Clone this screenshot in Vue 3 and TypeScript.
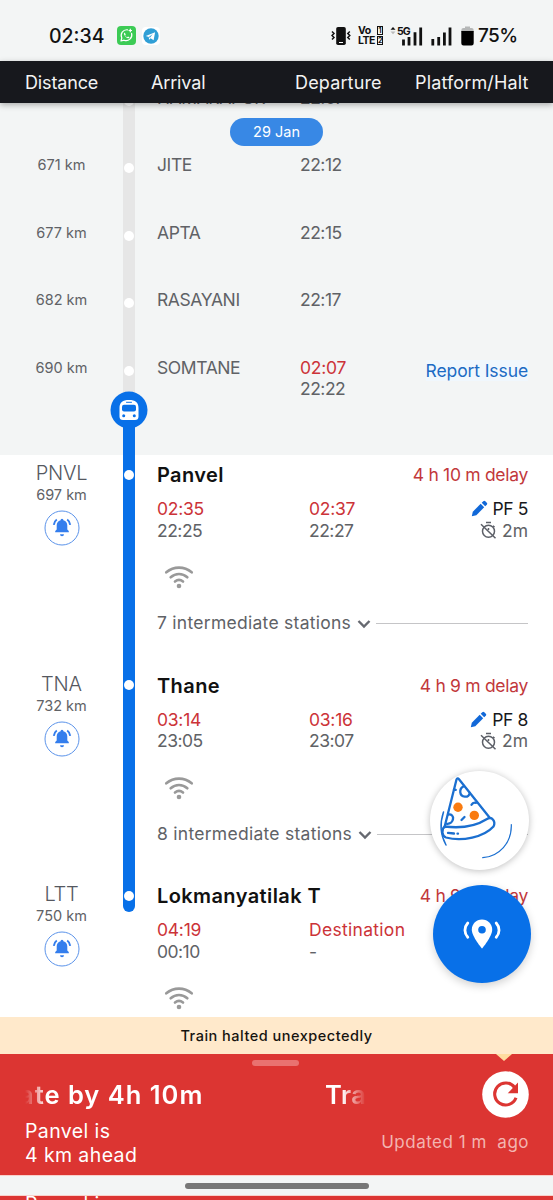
<script setup lang="ts">
interface Passed {
  name: string
  km: string
  late?: string
  time: string
}
interface Stop {
  code: string
  km: string
  name: string
  arr: string
  arrPlan: string
  dep: string
  depPlan: string
  delay: string
  pf?: string
  between?: string
}

const passed: Passed[] = [
  { name: 'HAMARAPUR', km: '', time: '22:07' },
  { name: 'JITE', km: '671 km', time: '22:12' },
  { name: 'APTA', km: '677 km', time: '22:15' },
  { name: 'RASAYANI', km: '682 km', time: '22:17' },
  { name: 'SOMTANE', km: '690 km', late: '02:07', time: '22:22' },
]

const stops: Stop[] = [
  { code: 'PNVL', km: '697 km', name: 'Panvel', arr: '02:35', arrPlan: '22:25', dep: '02:37', depPlan: '22:27', delay: '4 h 10 m delay', pf: 'PF 5', between: '7 intermediate stations' },
  { code: 'TNA', km: '732 km', name: 'Thane', arr: '03:14', arrPlan: '23:05', dep: '03:16', depPlan: '23:07', delay: '4 h 9 m delay', pf: 'PF 8', between: '8 intermediate stations' },
  { code: 'LTT', km: '750 km', name: 'Lokmanyatilak T', arr: '04:19', arrPlan: '00:10', dep: 'Destination', depPlan: '-', delay: '4 h 9 m delay' },
]
</script>

<template>
  <div class="phone">
    <div class="status">
      <span class="clock">02:34</span>
      <svg class="wa" width="19" height="19" viewBox="0 0 19 19">
        <rect width="19" height="19" rx="4" fill="#3ccb55" />
        <path d="M4 15l.8-3A5.7 5.7 0 0 1 10.500 3.800M14.600 7.400A5.700 5.700 0 0 1 7 14.200L4 15" fill="none" stroke="#fff" stroke-width="1.200" stroke-linecap="round" />
        <path d="M7.300 6.500c-1 1.200.2 3.200 1.500 4.400s3 1.800 3.800.6l-1.500-1-1 .7c-.9-.4-1.600-1.100-2-2l.7-.9z" fill="#fff" />
        <path d="M13.300 2.800v3.400M11.600 4.500H15" stroke="#fff" stroke-width="1.200" />
      </svg>
      <svg class="tg" width="18" height="18" viewBox="0 0 18 18">
        <rect width="18" height="18" rx="4" fill="#fff" />
        <circle cx="9" cy="9" r="7.700" fill="#309fd6" />
        <path d="M3.800 8.900l9.300-3.700-1.500 8-3-2-1.500 1.500-.3-2.600z" fill="#fff" />
        <path d="M6.800 10l4-2.900-2.900 3.600z" fill="#309fd6" />
      </svg>
      <div class="status-right">
        <svg width="20" height="20" viewBox="0 0 20 20" fill="none" stroke="#111" stroke-width="1.500">
          <rect x="5.200" y="1" width="9.600" height="18" rx="1.800" fill="#111" stroke="none" />
          <path d="M8 16.500h4" stroke="#fff" stroke-width="1" />
          <path d="M1 5.500l2 2-2 2 2 2-2 2M18.800 5.500l-2 2 2 2-2 2 2 2" />
        </svg>
        <div class="volte">
          <div><span>Vo</span><i class="solid">1</i></div>
          <div><span>LTE</span><i class="line">2</i></div>
        </div>
        <svg class="sig5" width="33" height="20" viewBox="0 0 33 20">
          <path d="M.5 3.800L3 1l2.500 2.800z" fill="#111" />
          <path d="M.5 5.500L3 8.200l2.500-2.700z" fill="#bbb" />
          <text x="7" y="9" font-size="10.500" font-weight="700" letter-spacing="-1" fill="#111">5G</text>
          <path d="M13.500 19.500v-6M19 19.500v-8.500M25 19.500V6.300M30.700 19.500V1.500" stroke="#111" stroke-width="2.800" />
        </svg>
        <svg class="sig" width="21" height="20" viewBox="0 0 21 20">
          <path d="M1.800 19.500v-6.500M7.700 19.500v-8.500M13.400 19.500V6.500M19 19.500V1.500" stroke="#111" stroke-width="2.800" />
        </svg>
        <svg class="batt" width="13" height="20" viewBox="0 0 13 20">
          <path d="M2.500 2H4V.500h5V2h1.500A2.200 2.200 0 0 1 12.700 4.200V6H.3V4.200A2.200 2.200 0 0 1 2.500 2z" fill="#b5b7b7" />
          <path d="M.3 5h12.400v12.300A2.200 2.200 0 0 1 10.500 19.500h-8A2.200 2.200 0 0 1 .3 17.300z" fill="#000" />
        </svg>
        <span class="pct">75%</span>
      </div>
    </div>

    <header class="head">
      <span class="tight">Distance</span><span class="tight">Arrival</span>
      <span class="wide">Departure</span><span class="wide">Platform/Halt</span>
    </header>

    <main class="list">
      <div class="date">29 Jan</div>
      <section class="passed">
        <div v-for="(p, i) in passed" :key="p.name" class="prow" :class="{ last: i === 4 }">
          <div class="pkm">{{ p.km }}</div>
          <div class="rail"><span class="dot" /></div>
          <div class="pname">{{ p.name }}</div>
          <div class="ptime">
            <div v-if="p.late" class="red">{{ p.late }}</div>
            <div class="plan">{{ p.time }}</div>
          </div>
          <div class="pissue"><span v-if="i === 4">Report Issue</span></div>
          <svg v-if="i === 4" class="train" width="38" height="38" viewBox="0 0 38 38">
            <circle cx="19" cy="19" r="18.500" fill="#0870e8" />
            <path d="M9.500 17c0-5.500 3-8 9.500-8s9.500 2.500 9.500 8v8.500a3.500 3.500 0 0 1-3.500 3.500H13a3.500 3.500 0 0 1-3.500-3.500z" fill="#fff" />
            <rect x="12" y="13.800" width="14" height="6.800" rx="2" fill="#0870e8" />
            <path d="M16.500 11.300h5" stroke="#0870e8" stroke-width="1" stroke-linecap="round" />
            <circle cx="13.700" cy="24.700" r="1.500" fill="#0870e8" />
            <circle cx="24.300" cy="24.700" r="1.500" fill="#0870e8" />
          </svg>
        </div>
      </section>

      <section v-for="(s, i) in stops" :key="s.code" class="stop">
        <div class="side">
          <div class="code">{{ s.code }}</div>
          <div class="km">{{ s.km }}</div>
          <svg class="bell" width="36" height="36" viewBox="0 0 36 36">
            <circle cx="18" cy="18" r="17" fill="#fff" stroke="#5b93ea" stroke-width="1" />
            <path d="M18 8.700a1.400 1.400 0 0 1 1.400 1.500c2.700.7 3.900 2.700 3.900 5.300v4l1.500 1.500v1.200H11.200V21l1.500-1.500v-4c0-2.600 1.200-4.600 3.900-5.300A1.400 1.400 0 0 1 18 8.700z" fill="#347eed" />
            <path d="M16 24.200h4a2 2 0 0 1-4 0z" fill="#347eed" />
            <path d="M12.800 9.600c-1.800 1.300-2.800 3-3 5.300M23.200 9.600c1.800 1.300 2.800 3 3 5.300" fill="none" stroke="#347eed" stroke-width="1.900" />
          </svg>
        </div>
        <div class="rail blue" :class="{ end: i === 2 }"><span class="dot" /></div>
        <div class="info">
          <div class="title"><b>{{ s.name }}</b><span class="delay">{{ s.delay }}</span></div>
          <div class="times">
            <div><div class="red">{{ s.arr }}</div><div class="plan">{{ s.arrPlan }}</div></div>
            <div><div class="red" :class="{ dest: i === 2 }">{{ s.dep }}</div><div class="plan">{{ s.depPlan }}</div></div>
            <div v-if="s.pf" class="plat">
              <div class="pf">
                <svg width="17" height="17" viewBox="0 0 17 17" fill="#1168d8">
                  <path d="M.8 16.200l1-4.500L9.700 3.800l3.500 3.500-7.900 7.900z" />
                  <path d="M10.700 2.800l1.600-1.600a1.400 1.400 0 0 1 2 0l1.500 1.500a1.400 1.400 0 0 1 0 2l-1.600 1.600z" />
                </svg>{{ s.pf }}
              </div>
              <div class="halt">
                <svg width="17" height="18" viewBox="0 0 17 18" fill="none" stroke="#5d6068" stroke-width="1.500">
                  <circle cx="8.500" cy="10.200" r="6" />
                  <path d="M6 1.500h5M8.500 7v2M13 4.700l1.500 1.500M1 3.200l14.500 14" />
                </svg>2m
              </div>
            </div>
          </div>
          <svg class="wifi" width="30" height="24" viewBox="0 0 30 24" fill="none" stroke="#999" stroke-width="2.700" stroke-linecap="round">
            <path d="M2.300 7.300c7.600-6.200 17.800-6.200 25.400 0" />
            <path d="M6.700 12.200c4.900-4.300 11.700-4.300 16.600 0" />
            <path d="M11 16.500c2.400-1.900 5.600-1.900 8 0" />
            <circle cx="15" cy="21" r="2.300" fill="#999" stroke="none" />
          </svg>
          <div v-if="s.between" class="between">
            <span>{{ s.between }}</span>
            <svg width="14" height="10" viewBox="0 0 14 10"><path d="M1.500 2l5.500 5.500L12.500 2" fill="none" stroke="#666970" stroke-width="2.400" /></svg>
            <hr />
          </div>
        </div>
      </section>
    </main>

    <div class="alert">Train halted unexpectedly</div>
    <footer class="sheet">
      <div class="grab" />
      <div class="notch" />
      <div class="bar">
        <div class="marquee"><span class="m1">ate by 4h 10m</span><span class="m2">Train</span></div>
        <svg class="refresh" width="47" height="47" viewBox="0 0 47 47">
          <circle cx="23.500" cy="23.500" r="23.300" fill="#fff" />
          <path d="M32.600 16.500A11 11 0 1 0 34 26.800" fill="none" stroke="#dc3532" stroke-width="3.100" />
          <path d="M36 11.500v10.800H25.700z" fill="#dc3532" />
        </svg>
      </div>
      <div class="bar low">
        <div class="ahead">Panvel is<br />4 km ahead</div>
        <div class="upd">Updated 1 m&nbsp; ago</div>
      </div>
    </footer>
    <div class="nav"><span /></div>
    <div class="peek">Panvel is</div>

    <svg class="fab pizza" width="99" height="99" viewBox="0 0 99 99" fill="none" stroke="#1b6fd0" stroke-width="2.300" stroke-linecap="round" stroke-linejoin="round">
      <path d="M14.500 56.300L26.500 8.500Q27.500 6.500 29 8.200L59.500 46.500" />
      <path d="M14.500 55.500C30 57.500 46 55 57 48c5-3 9 2.500 6.500 7.500C54 66 32 71 16 66.500c-4-1.300-5-8-1.500-11z" />
      <path d="M33.300 15.500c-4.500 2.500-4 9.500 1.500 10.200 3 .2 4.500-1.500 5-3.800M18.500 43.500c3-.5 5 1.800 4.500 4.500-.4 2.500-2.500 5-6 4.800M41.500 33.800c1-2 2.500-2.500 4.500-2M24 18.500l1.800.3M31.500 49l3-3" />
      <path d="M18 61.800l6 .7M27.500 62.700h.500" />
      <path d="M13.500 41C9.500 53 11 65 16 74" stroke-width="1.500" />
      <path d="M81.300 53.500C82 72 69 85.500 52.700 86.700" stroke-width="1.200" />
      <circle cx="28" cy="36.300" r="4.700" fill="#f97b10" stroke="none" />
      <circle cx="44.300" cy="44.400" r="4.700" fill="#f97b10" stroke="none" />
    </svg>
    <svg class="fab locate" width="98" height="98" viewBox="0 0 98 98">
      <path d="M49 34.500c-5.900 0-10.200 4.400-10.200 10.200C38.800 51.500 49 63.500 49 63.500s10.200-12 10.200-18.800c0-5.800-4.300-10.200-10.200-10.200z" fill="#fff" />
      <circle cx="49" cy="44.700" r="3.800" fill="#0870e8" />
      <path d="M34.800 38c-3.800 4.300-3.800 10 0 14.300M63.200 38c3.800 4.300 3.800 10 0 14.300" fill="none" stroke="#fff" stroke-width="2.800" stroke-linecap="round" />
    </svg>
  </div>
</template>

<style>
body { margin: 0; }
</style>

<style scoped>
.phone { position: relative; width: 553px; height: 1200px; overflow: hidden; background: #fff; font-family: Inter, "Liberation Sans", sans-serif; color: #606266; font-size: 17.5px; display: flex; flex-direction: column; white-space: nowrap; }
svg { flex: none; display: block; }
.status { height: 61px; flex: none; background: #f3f5f5; display: flex; align-items: center; padding: 10px 36px 0 49px; box-sizing: border-box; color: #111; }
.clock { font-size: 19.5px; font-weight: 500; width: 68px; }
.tg { margin-left: 6px; }
.status-right { margin-left: auto; display: flex; align-items: center; }
.volte { margin-left: 7px; width: 25px; font-weight: 700; font-size: 10.500px; line-height: 10px; letter-spacing: -.5px; }
.volte div { display: flex; justify-content: space-between; align-items: center; }
.volte i { font-style: normal; font-size: 7px; line-height: 7px; width: 4px; text-align: center; border: 1px solid #111; letter-spacing: 0; }
.volte .solid { border-width: 1px 1.500px; }
.sig5 { margin-left: 7px; }
.sig { margin-left: 8px; }
.batt { margin-left: 9px; }
.pct { font-size: 19px; font-weight: 500; margin-left: 4px; letter-spacing: -.6px; width: 39px; }

.head { height: 42px; flex: none; background: #17181d; color: #f3f3f3; display: grid; grid-template-columns: 126px 144px 120px 1fr; padding-left: 25px; align-items: center; position: relative; z-index: 2; box-shadow: 0 2px 6px rgba(0, 0, 0, .3); font-size: 18px; }
.tight { letter-spacing: -.15px; }
.wide { letter-spacing: .15px; }
.list { height: 914px; flex: none; overflow: hidden; position: relative; }
.date { position: absolute; z-index: 2; left: 230px; top: 15px; width: 93px; height: 28px; border-radius: 14px; background: #3888e5; color: #fff; font-size: 14.500px; line-height: 28px; text-align: center; }
.passed { background: #f3f5f5; margin-top: -39.500px; height: 391.500px; overflow: hidden; }
.prow { display: grid; grid-template-columns: 123px 12px 165px 100px 128px; height: 67.500px; position: relative; line-height: 21.500px; }
.prow.last { height: 122px; }
.prow > .pname, .ptime, .pissue { padding-top: 23px; }
.pname { padding-left: 22px; letter-spacing: -.4px; }
.pissue { text-align: right; color: #1c6bc4; padding-top: 26px; letter-spacing: -.1px; }
.pissue span { background: #f0f7fd; }
.pkm { padding-top: 23px; text-align: center; font-size: 14.500px; }
.rail { background: #e6e6e6; position: relative; display: flex; justify-content: center; }
.dot { width: 10px; height: 10px; border-radius: 50%; background: #fff; margin-top: 32px; }
.prow.last .rail { background: linear-gradient(#e6e6e6 76px, #0870e8 76px); }
.train { position: absolute; left: 110px; top: 57px; }
.red { color: #cc3338; letter-spacing: -.25px; }
.plan { letter-spacing: -.5px; }

.stop { display: grid; grid-template-columns: 123px 12px 1fr; height: 210.500px; background: #fff; }
.side { display: flex; flex-direction: column; align-items: center; padding-top: 6px; }
.code { font-size: 20px; line-height: 25px; font-weight: 300; color: #55585f; letter-spacing: -.2px; }
.km { font-size: 14.500px; line-height: 18px; }
.bell { margin-top: 6px; }
.rail.blue { background: #0870e8; }
.rail.blue .dot { margin-top: 14.500px; }
.rail.end { height: 36px; border-radius: 0 0 6px 6px; }
.info { padding: 0 25px 0 22px; }
.title { height: 43px; line-height: 40px; display: flex; justify-content: space-between; }
.title b { font-size: 20px; font-weight: 600; color: #111; letter-spacing: .4px; }
.delay { color: #c2383b; letter-spacing: -.3px; }
.times { display: grid; grid-template-columns: 152px 120px 1fr; line-height: 21.500px; height: 67px; }
.red.dest { letter-spacing: .3px; }
.plat { display: flex; flex-direction: column; align-items: flex-end; }
.pf, .halt { display: flex; align-items: center; gap: 5px; }
.pf { color: #17181c; letter-spacing: -.4px; }
.wifi { margin-left: 7px; }
.between { display: flex; align-items: center; height: 24px; margin-top: 21.500px; letter-spacing: .27px; }
.between svg { margin: 3px 5px 0 6px; }
.between hr { flex: 1; border: 0; border-top: 1px solid #c5c5c7; margin: 2px 0 0; }

.alert { height: 37px; flex: none; background: #ffe9cb; color: #15130f; font-size: 14.500px; font-weight: 500; line-height: 38px; text-align: center; letter-spacing: .5px; }
.sheet { height: 121px; flex: none; background: #dc3532; color: #fff; position: relative; padding: 17px 24px 0 25px; box-sizing: border-box; }
.grab { position: absolute; left: 252px; top: 6px; width: 47px; height: 6px; border-radius: 3px; background: #e97270; }
.notch { position: absolute; left: 496px; top: 0; border: 8px solid transparent; border-top: 7px solid #ffdca0; border-bottom: 0; }
.bar { display: flex; justify-content: space-between; height: 47px; }
.marquee { width: 341px; overflow: hidden; display: flex; font-size: 25.500px; font-weight: 600; line-height: 48px; letter-spacing: 1px; -webkit-mask-image: linear-gradient(90deg, transparent, #000 22px, #000 317px, transparent); mask-image: linear-gradient(90deg, transparent, #000 22px, #000 317px, transparent); }
.m1 { width: 300px; margin-left: -6px; flex: none; }
.m2 { margin-left: 6px; letter-spacing: .5px; }
.ahead { font-size: 19.500px; line-height: 24px; letter-spacing: .4px; padding-top: 1px; }
.low { height: 50px; }
.upd { color: #f3b4b0; font-size: 17px; line-height: 48px; letter-spacing: .5px; }
.nav { height: 21px; flex: none; background: #f3f5f5; border-top: 1px solid #f9d0ca; border-bottom: 1px solid #f9d0ca; box-sizing: border-box; display: flex; justify-content: center; padding-top: 7px; }
.nav span { width: 184px; height: 6px; border-radius: 3px; background: #777; }
.peek { height: 4px; flex: none; background: #dc3532; color: #fff; font-size: 19.500px; letter-spacing: .4px; line-height: 17px; overflow: hidden; padding-left: 25px; }
.fab { position: absolute; z-index: 3; border-radius: 50%; }
.pizza { left: 430px; top: 771px; background: #fff; box-shadow: 0 1px 7px rgba(0, 0, 0, .25); }
.locate { left: 433px; top: 885px; background: #0870e8; box-shadow: 0 3px 8px rgba(0, 0, 0, .18); }
</style>
